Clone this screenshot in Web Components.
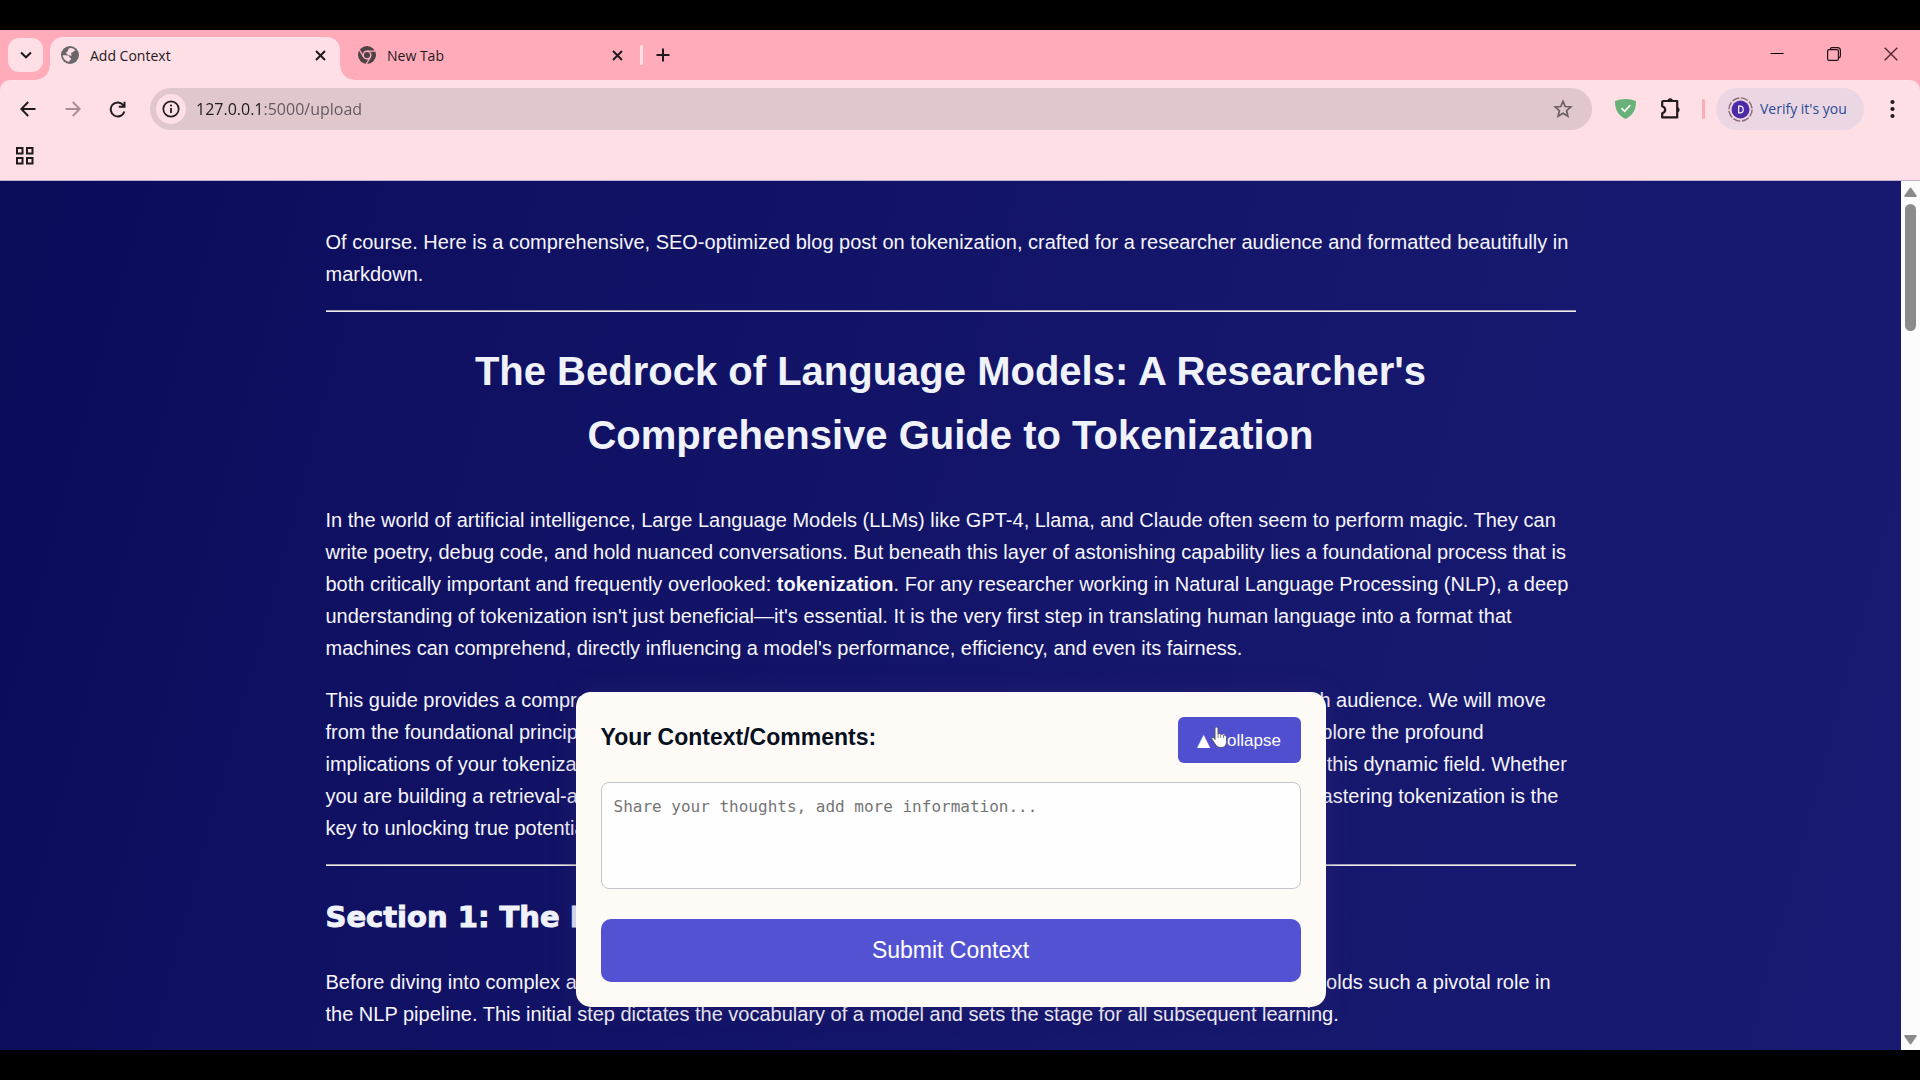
<!DOCTYPE html>
<html lang="en">
<head>
<meta charset="utf-8">
<title>Add Context</title>
<style>
html, body { margin: 0; height: 100%; background: #000; }
body { font-family: "Liberation Sans", Arial, sans-serif; overflow: hidden; }
</style>
</head>
<body>
<browser-window>
  <tab-strip slot="tabs">
    <browser-tab active>
      <svg slot="icon" width="18" height="18" viewBox="0 0 18 18"><circle cx="9" cy="9" r="9" fill="#6a6568"/><path d="M8.500 2.200C10.800 1.500 13 2.600 14.400 4.300 13.600 5 12.800 5 12.300 5.800 11.700 6.800 10.400 6.400 10 7.400 9.800 8.300 10.800 8.300 11 9.200 9.400 9.600 7.500 9.500 6.500 8.400 6.300 7.600 5.200 7.600 4.600 7 5.200 6 6.500 5.900 6.900 4.900 7 3.900 7.300 2.700 8.500 2.200Z" fill="#fddfe5"/><path d="M1.800 9.300 5.200 9.300C7 9.400 8.300 10 8.600 11.400 9.800 11.400 10.300 12.100 10 13.200 9.500 14.200 8.600 14 8.300 15.700 4.600 15.400 2 12.700 1.800 9.300Z" fill="#fddfe5"/></svg>
      Add Context
    </browser-tab>
    <browser-tab>
      <svg slot="icon" width="18" height="18" viewBox="0 0 18 18"><circle cx="9" cy="9" r="9" fill="#4d4246"/><circle cx="9" cy="9" r="3.800" fill="none" stroke="#ffabba" stroke-width="1.400"/><path d="M9 5.100H17.200M5.600 11 1.500 4M12.400 11 8.300 18" stroke="#ffabba" stroke-width="1.400" fill="none"/></svg>
      New Tab
    </browser-tab>
  </tab-strip>
  <tool-bar slot="toolbar"></tool-bar>
  <page-view slot="page">
    <blog-article>
      <p>Of course. Here is a comprehensive, SEO-optimized blog post on tokenization, crafted for a researcher audience and formatted beautifully in markdown.</p>
      <hr>
      <article-heading level="1">The Bedrock of Language Models: A Researcher's Comprehensive Guide to Tokenization</article-heading>
      <p>In the world of artificial intelligence, Large Language Models (LLMs) like GPT-4, Llama, and Claude often seem to perform magic. They can write poetry, debug code, and hold nuanced conversations. But beneath this layer of astonishing capability lies a foundational process that is both critically important and frequently overlooked: <strong>tokenization</strong>. For any researcher working in Natural Language Processing (NLP), a deep understanding of tokenization isn't just beneficial—it's essential. It is the very first step in translating human language into a format that machines can comprehend, directly influencing a model's performance, efficiency, and even its fairness.</p>
      <p>This guide provides a comprehensive, in-depth exploration of tokenization, tailored for a technical and AI research audience. We will move from the foundational principles and basic algorithms to the practical trade-offs and advanced challenges, and explore the profound implications of your tokenization choices on model performance, costs, multilingual capability, and fairness within this dynamic field. Whether you are building a retrieval-augmented generation (RAG) system or fine-tuning your bespoke language model, mastering tokenization is the key to unlocking true potential.</p>
      <hr>
      <article-heading level="2">Section 1: The Role of Tokenization</article-heading>
      <p>Before diving into complex algorithms, let's first establish what tokenization is, how it works in theory, and why it holds such a pivotal role in the NLP pipeline. This initial step dictates the vocabulary of a model and sets the stage for all subsequent learning.</p>
    </blog-article>
    <context-panel slot="overlay"></context-panel>
  </page-view>
</browser-window>

<template id="window-t">
<style>
:host { display: flex; flex-direction: column; height: 100vh; box-sizing: border-box; padding: 30px 0; background: #000; }
main { flex: 1; min-height: 0; display: flex; }
::slotted([slot=page]) { flex: 1; min-width: 0; }
</style>
<slot name="tabs"></slot>
<slot name="toolbar"></slot>
<main><slot name="page"></slot></main>
</template>

<template id="strip-t">
<style>
:host { display: flex; height: 50px; background: #ffabba; color: #1f1a1d; font-family: "Open Sans", sans-serif; }
button { border: 0; padding: 0; background: none; color: inherit; display: grid; place-items: center; }
.search { width: 35px; height: 34px; border-radius: 11px; background: #fddfe5; margin: 8px 7px 0 8px; }
.rule { width: 3px; height: 20px; border-radius: 2px; background: #fddfe5; margin: 15px 10px 0 0; }
.new { width: 20px; height: 50px; }
.controls { margin-left: auto; display: flex; gap: 11px; padding-right: 6px; }
.controls button { width: 46px; height: 48px; }
</style>
<button class="search" aria-label="Search tabs"><svg width="12" height="8" viewBox="0 0 12 8" fill="none" stroke="#1f1a1d" stroke-width="2"><path d="M1 1.500 6 6.300 11 1.500"/></svg></button>
<slot></slot>
<span class="rule"></span>
<button class="new" aria-label="New tab"><svg width="14" height="14" viewBox="0 0 14 14" stroke="#1f1a1d" stroke-width="2"><path d="M7 .5v13M.5 7h13"/></svg></button>
<div class="controls">
<button aria-label="Minimize"><svg width="14" height="14" viewBox="0 0 14 14" stroke="#000"><path d="M.5 6.500h13"/></svg></button>
<button aria-label="Restore"><svg width="14" height="14" viewBox="0 0 14 14" fill="none" stroke="#1f1015" stroke-width="1.200"><rect x=".6" y="2.600" width="10.800" height="10.800" rx="1.500"/><path d="M3.200 2.400C3.300 1.200 4 .6 5 .6h5.500c1.700 0 2.900 1.200 2.900 2.900v5.500c0 1-.6 1.700-1.800 1.800"/></svg></button>
<button aria-label="Close window"><svg width="14" height="14" viewBox="0 0 14 14" stroke="#4a1f2a" stroke-width="1.300"><path d="M.7.7 13.300 13.300M13.300.7.7 13.300"/></svg></button>
</div>
</template>

<template id="tab-t">
<style>
:host { display: flex; align-items: center; box-sizing: border-box; width: 300px; height: 50px; padding: 0 17px 0 18px; font-size: 14px; line-height: 20px; position: relative; }
:host([active]) { width: 290px; padding: 0 14px 0 11px; }
:host([active])::before, :host([active])::after { content: ""; position: absolute; bottom: 0; width: 14px; height: 14px; }
:host([active])::before { left: -14px; background: radial-gradient(circle at 0 0, transparent 13px, #fddfe5 14px); }
:host([active])::after { right: -14px; background: radial-gradient(circle at 100% 0, transparent 13px, #fddfe5 14px); }
.crown { display: none; }
:host([active]) .crown { display: block; position: absolute; inset: 7px 0 0 0; background: #fddfe5; border-radius: 13px 13px 0 0; }
.row { position: relative; flex: 1; display: flex; align-items: center; gap: 11px; }
.label { flex: 1; padding-top: 2px; }
button { border: 0; padding: 0; background: none; display: grid; place-items: center; width: 12px; height: 20px; }
::slotted(svg) { display: block; }
</style>
<span class="crown"></span>
<div class="row"><slot name="icon"></slot><span class="label"><slot></slot></span>
<button aria-label="Close tab"><svg width="11" height="11" viewBox="0 0 11 11" stroke="#1f1a1d" stroke-width="2"><path d="M1 1 10 10M10 1 1 10"/></svg></button></div>
</template>

<template id="toolbar-t">
<style>
:host { display: block; background: linear-gradient(#ffabba, #ffabba) 0 0 / 100% 10px no-repeat; font-family: "Open Sans", sans-serif; }
.box { background: #fddfe5; border-radius: 10px 10px 0 0; border-bottom: 1px solid #bfb0d2; height: 100px; display: flex; flex-direction: column; }
.bar { display: flex; align-items: center; padding: 8px 25px 0 19px; height: 42px; }
button { border: 0; padding: 0; background: none; display: grid; place-items: center; }
svg { display: block; }
.nav { display: flex; width: 107px; justify-content: space-between; margin-right: 24px; }
.nav button { width: 17px; height: 30px; }
.omni { flex: 1; height: 42px; border-radius: 21px; background: #dfc7cc; display: flex; align-items: center; padding: 0 19px 0 6px; }
.info { width: 30px; height: 30px; border-radius: 50%; background: #fddfe5; margin-right: 10px; }
input { flex: 1; min-width: 0; border: 0; outline: 0; padding: 0; height: 30px; font: 16px/30px "Open Sans", sans-serif; color: transparent; background: linear-gradient(90deg, #1f1a1d 67px, #62575f 67px); -webkit-background-clip: text; background-clip: text; }
.shield { margin: 0 24px 0 23px; }
.rule { width: 3px; height: 20px; border-radius: 2px; background: #ffabba; margin: 0 11px 0 20px; }
.verify { display: flex; align-items: center; gap: 7px; width: 148px; height: 42px; border-radius: 21px; background: #ead7e3; padding-left: 12px; color: #2b4a94; font: 14px/20px "Open Sans", sans-serif; white-space: nowrap; margin-right: 26px; }
.avatar { width: 25px; height: 25px; }
.marks { padding: 17px 16px; }
</style>
<div class="box">
<div class="bar">
<div class="nav">
<button aria-label="Back"><svg width="16" height="16" viewBox="0 0 16 16" fill="none" stroke="#1f1a1d" stroke-width="2"><path d="M8.200 1 1.300 8l6.900 7M1.500 8H15.500"/></svg></button>
<button aria-label="Forward"><svg width="16" height="16" viewBox="0 0 16 16" fill="none" stroke="#a78e95" stroke-width="2"><path d="M7.800 1 14.700 8l-6.900 7M14.500 8H.5"/></svg></button>
<button aria-label="Reload"><svg width="17" height="17" viewBox="0 0 17 17" fill="none" stroke="#1f1a1d" stroke-width="2"><path d="M14.500 4.500A7 7 0 1 0 15.400 10.500M15.500.8V5.700H9.800"/></svg></button>
</div>
<div class="omni">
<button class="info" aria-label="Site information"><svg width="18" height="18" viewBox="0 0 18 18"><circle cx="9" cy="9" r="7.700" fill="none" stroke="#1f1a1d" stroke-width="1.700"/><path d="M9 8v5" stroke="#1f1a1d" stroke-width="1.800"/><circle cx="9" cy="5.500" r="1.100" fill="#1f1a1d"/></svg></button>
<input type="text" aria-label="Address" value="127.0.0.1:5000/upload">
<button aria-label="Bookmark this tab"><svg width="20" height="20" viewBox="0 0 20 20" fill="none" stroke="#6b5f64" stroke-width="1.700"><path d="M10 2.400 12.200 7.500 17.800 8 13.600 11.700 14.900 17.200 10 14.300 5.100 17.200 6.400 11.700 2.200 8 7.800 7.500Z"/></svg></button>
</div>
<button class="shield" aria-label="Ad blocker"><svg width="21" height="20" viewBox="0 0 21 20"><path d="M10.500 0C13.500 0 18 .8 21 2 21 9 19.500 15.500 10.500 20 1.500 15.500 0 9 0 2 3 .8 7.500 0 10.500 0Z" fill="#68b279"/><path d="M6.500 9.200 9.700 12.300 15.200 6.300" fill="none" stroke="#fff" stroke-width="1.700"/></svg></button>
<button aria-label="Extensions"><svg width="22" height="22" viewBox="0 0 22 22"><path d="M3.200 3H17.200V19.400H2.200V15.200C6.200 13.800 6.200 9.600 2.200 8.200V4Q2.200 3 3.200 3Z" fill="none" stroke="#1f1a1d" stroke-width="2.200" stroke-linejoin="round"/><path d="M7.500 3a2.700 2.700 0 0 1 5.400 0ZM17.500 9a2.900 2.900 0 0 1 0 5.600Z" fill="#1f1a1d"/></svg></button>
<span class="rule"></span>
<button class="verify"><svg class="avatar" viewBox="0 0 25 25"><circle cx="12.500" cy="12.500" r="11.600" fill="none" stroke="#8c6a78" stroke-width="1.400" stroke-dasharray="7.500 1.610"/><circle cx="12.500" cy="12.500" r="9" fill="#4e2ba6"/><path d="M10.700 9.200H12.200C14.300 9.200 15.200 10.700 15.200 12.500S14.300 15.800 12.200 15.800H10.700Z" fill="none" stroke="#fff" stroke-width="1.200"/></svg>Verify it's you</button>
<button aria-label="Menu"><svg width="5" height="20" viewBox="0 0 5 20" fill="#1f1a1d"><circle cx="2.500" cy="3" r="2.100"/><circle cx="2.500" cy="10" r="2.100"/><circle cx="2.500" cy="17" r="2.100"/></svg></button>
</div>
<div class="marks"><button aria-label="All apps"><svg width="18" height="18" viewBox="0 0 18 18" fill="none" stroke="#1f1a1d" stroke-width="2"><rect x="1" y="1" width="5.500" height="5.500"/><rect x="11" y="1" width="5.500" height="5.500"/><rect x="1" y="11" width="5.500" height="5.500"/><rect x="11" y="11" width="5.500" height="5.500"/></svg></button></div>
</div>
</template>

<template id="page-t">
<style>
:host { display: flex; position: relative; min-height: 0; }
.doc { flex: 1; min-width: 0; overflow: hidden; position: relative; padding: 45px 20px 0; background: linear-gradient(105deg, #0a0b59, #101163 25%, #16186e 70%, #181a73); }
.scroll { width: 19px; background: #fcfcfc; display: flex; flex-direction: column; align-items: center; padding: 6px 0 5px; box-sizing: border-box; }
.thumb { width: 11px; height: 127px; border-radius: 6px; background: #8b8b8b; margin-top: 7px; }
.down { margin-top: auto; }
svg { display: block; }
</style>
<div class="doc"><slot></slot><slot name="overlay"></slot></div>
<div class="scroll">
<svg width="13" height="10" viewBox="0 0 13 10"><path d="M5.700.9Q6.500 0 7.300.9L12.600 8.600Q13 10 12 10H1Q0 10 .4 8.600Z" fill="#8b8b8b"/></svg>
<span class="thumb"></span>
<svg class="down" width="13" height="10" viewBox="0 0 13 10"><path d="M5.700 9.100Q6.500 10 7.300 9.100L12.600 1.400Q13 0 12 0H1Q0 0 .4 1.400Z" fill="#8b8b8b"/></svg>
</div>
</template>

<template id="article-t">
<style>
:host { display: block; max-width: 1250px; margin: 0 auto; color: #f6f5fb; font-size: 20px; line-height: 32px; }
::slotted(p) { margin: 0 0 20px; }
::slotted(hr) { margin: 0 0 27px; border: 0; border-top: 1px solid #a3a3b0; border-bottom: 1px solid #ececf2; }
</style>
<slot></slot>
</template>

<template id="heading-t">
<style>
:host { display: block; }
h1, h2 { margin: 0; color: #f0f2fa; }
h1 { font-size: 40px; line-height: 64px; text-align: center; margin-bottom: 37px; }
h2 { font: bold 29px/48px "DejaVu Sans", sans-serif; -webkit-text-stroke: 1px #f0f2fa; margin-bottom: 25px; }
</style>
</template>

<template id="panel-t">
<style>
:host { position: absolute; left: 0; right: 0; bottom: 43px; margin: 0 auto; width: 750px; max-width: 100%; box-sizing: border-box; padding: 25px; background: #fefaf5; border-radius: 15px; box-shadow: 0 0 25px rgba(60, 45, 120, .35); color: #06101f; }
header { display: flex; justify-content: space-between; align-items: flex-start; margin-bottom: 19px; }
label { font-weight: bold; font-size: 23px; line-height: 40px; }
button { border: 0; color: #fff; font-family: inherit; background: #5352d3; }
.toggle { position: relative; width: 123px; height: 46px; border-radius: 6px; font-size: 17px; background: #4f4fd0; padding: 0; white-space: nowrap; }
.mark { font-family: "DejaVu Sans", sans-serif; }
.cursor { position: absolute; left: 33px; top: 9px; }
textarea { display: block; width: 100%; height: 107px; box-sizing: border-box; margin: 0 0 30px; padding: 13px 12px; border: 1px solid #c6c6ca; border-radius: 8px; background: #fefefe; resize: none; outline: 0; font: 16px/22px "DejaVu Sans Mono", monospace; }
textarea::placeholder { color: #757575; opacity: 1; }
.submit { display: block; width: 100%; height: 63px; border-radius: 10px; font-size: 23px; }
</style>
<header><label for="c">Your Context/Comments:</label>
<button class="toggle" type="button"><span class="mark">▲</span> Collapse<svg class="cursor" width="17" height="23" viewBox="0 0 17 23"><path d="M4 13.500V2.600C4 .6 7 .6 7 2.600V8.200C7.700 7.200 9.400 7.500 9.700 8.700 10.700 8 12.200 8.400 12.500 9.600 13.700 9 15.500 9.700 15.500 11.400V15.500C15.500 19.500 13.500 21.500 9.800 21.500 6.600 21.500 5.300 20 4 17.800L1.100 13.400C.1 11.700 2 10.600 3 11.900Z" fill="#fff" stroke="#55565e" stroke-width="1"/><path d="M7 8.200V12M9.700 8.800V12M12.500 9.600V12.300" stroke="#77787e" stroke-width=".9"/></svg></button></header>
<textarea id="c" placeholder="Share your thoughts, add more information..."></textarea>
<button class="submit" type="button">Submit Context</button>
</template>

<script>
function define(name, templateId, setup) {
  customElements.define(name, class extends HTMLElement {
    constructor() {
      super();
      const root = this.attachShadow({ mode: "open" });
      root.append(document.getElementById(templateId).content.cloneNode(true));
      if (setup) setup(this, root);
    }
  });
}
define("browser-window", "window-t");
define("tab-strip", "strip-t");
define("browser-tab", "tab-t");
define("tool-bar", "toolbar-t");
define("page-view", "page-t");
define("blog-article", "article-t");
define("article-heading", "heading-t", (host, root) => {
  const heading = document.createElement("h" + host.getAttribute("level"));
  heading.append(document.createElement("slot"));
  root.append(heading);
});
define("context-panel", "panel-t");
</script>
</body>
</html>
